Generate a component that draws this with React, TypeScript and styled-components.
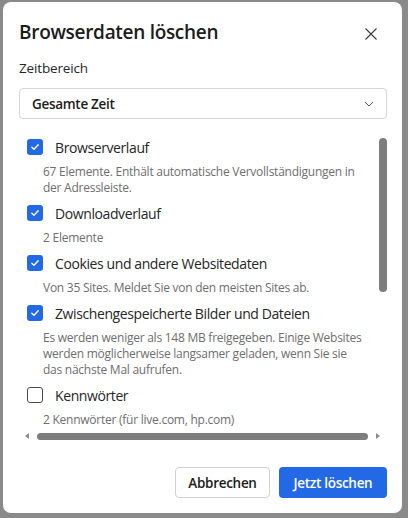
import styled, { createGlobalStyle } from "styled-components";

const blue = "#2369e6";
const font = '"Open Sans", "Noto Sans", "Liberation Sans", sans-serif';

const GlobalStyle = createGlobalStyle`
  html, body {
    margin: 0;
    background: #8a8a8a;
    font-family: ${font};
  }
`;

const Backdrop = styled.div({
  padding: "2px 6px 5px 3px",
  height: "511px",
});

const Dialog = styled.div({
  boxSizing: "border-box",
  height: "511px",
  background: "#fff",
  borderRadius: "8px",
  padding: "16px 15px 15px 16px",
  display: "flex",
  flexDirection: "column",
});

const Header = styled.div({
  display: "flex",
  alignItems: "center",
  justifyContent: "space-between",
  height: "28px",
});

const Title = styled.h1({
  margin: 0,
  fontSize: "19px",
  fontWeight: 600,
  letterSpacing: "-0.3px",
  color: "#1b1b1b",
  lineHeight: "28px",
});

const Close = styled.button({
  width: "24px",
  height: "24px",
  marginRight: "4px",
  marginTop: "4px",
  padding: 0,
  border: "none",
  background: "none",
  display: "flex",
  alignItems: "center",
  justifyContent: "center",
});

const Label = styled.div({
  marginTop: "12px",
  fontSize: "13.5px",
  letterSpacing: "-0.15px",
  lineHeight: "20px",
  color: "#262626",
});

const Select = styled.div({
  boxSizing: "border-box",
  marginTop: "10px",
  height: "31px",
  border: "1px solid #d6d6d6",
  borderRadius: "4px",
  padding: "0 12px 0 12px",
  display: "flex",
  alignItems: "center",
  justifyContent: "space-between",
  fontSize: "13.5px",
  letterSpacing: "-0.3px",
  fontWeight: 600,
  color: "#1b1b1b",
});

const ScrollArea = styled.div({
  marginTop: "9px",
  marginRight: "-2px",
  height: "314px",
  display: "grid",
  gridTemplateColumns: "1fr 12px",
  gridTemplateRows: "1fr 12px",
});

const Viewport = styled.div({
  overflow: "hidden",
  padding: "3px 0 0 8px",
});

const VBar = styled.div({
  paddingTop: "10px",
  paddingLeft: "2px",
});

const VThumb = styled.div({
  width: "8px",
  height: "154px",
  borderRadius: "4px",
  background: "#7d7d7d",
});

const HBar = styled.div({
  gridColumn: "1 / -1",
  display: "flex",
  alignItems: "center",
  gap: "8px",
  padding: "0 9px 0 6px",
});

const HThumb = styled.div({
  flex: 1,
  height: "7px",
  borderRadius: "4px",
  background: "#7d7d7d",
});

const Arrow = styled.div<{ $dir: "left" | "right" }>((p) => ({
  width: 0,
  height: 0,
  borderTop: "3.5px solid transparent",
  borderBottom: "3.5px solid transparent",
  [p.$dir === "left" ? "borderRight" : "borderLeft"]: "4px solid #8c8c8c",
}));

const Item = styled.div({
  marginBottom: "1px",
});

const CheckRow = styled.div({
  height: "32px",
  display: "flex",
  alignItems: "center",
  gap: "12px",
  fontSize: "14px",
  letterSpacing: "-0.4px",
  color: "#262626",
});

const Box = styled.span<{ $on: boolean }>((p) => ({
  boxSizing: "border-box",
  width: "16px",
  height: "16px",
  borderRadius: "3px",
  background: p.$on ? blue : "#fff",
  border: p.$on ? "none" : "1.5px solid #4a4a4a",
  display: "flex",
  alignItems: "center",
  justifyContent: "center",
  flexShrink: 0,
}));

const Desc = styled.div({
  marginTop: "1px",
  marginLeft: "16px",
  fontSize: "12px",
  letterSpacing: "-0.25px",
  lineHeight: "16px",
  color: "#6e6e6e",
  whiteSpace: "nowrap",
});

const Footer = styled.div({
  marginTop: "auto",
  display: "flex",
  justifyContent: "flex-end",
  gap: "9px",
});

const Button = styled.button<{ $primary?: boolean }>((p) => ({
  boxSizing: "border-box",
  height: "31px",
  width: p.$primary ? "108px" : "95px",
  padding: 0,
  borderRadius: "4px",
  fontFamily: font,
  fontSize: "13.5px",
  letterSpacing: "-0.3px",
  fontWeight: 600,
  border: p.$primary ? "none" : "1px solid #d1d1d1",
  background: p.$primary ? blue : "#fff",
  color: p.$primary ? "#fff" : "#1b1b1b",
}));

const items = [
  {
    on: true,
    label: "Browserverlauf",
    desc: ["67 Elemente. Enthält automatische Vervollständigungen in", "der Adressleiste."],
  },
  { on: true, label: "Downloadverlauf", desc: ["2 Elemente"] },
  {
    on: true,
    label: "Cookies und andere Websitedaten",
    desc: ["Von 35 Sites. Meldet Sie von den meisten Sites ab."],
  },
  {
    on: true,
    label: "Zwischengespeicherte Bilder und Dateien",
    desc: [
      "Es werden weniger als 148 MB freigegeben. Einige Websites",
      "werden möglicherweise langsamer geladen, wenn Sie sie",
      "das nächste Mal aufrufen.",
    ],
  },
  { on: false, label: "Kennwörter", desc: ["2 Kennwörter (für live.com, hp.com)"] },
];

const Check = () => (
  <svg width="10" height="10" viewBox="0 0 10 10">
    <path d="M1.8 5.2 L4 7.3 L8.2 2.8" fill="none" stroke="#fff" strokeWidth="1.4" strokeLinecap="round" strokeLinejoin="round" />
  </svg>
);

const App = () => (
  <>
    <GlobalStyle />
    <Backdrop>
      <Dialog>
        <Header>
          <Title>Browserdaten löschen</Title>
          <Close aria-label="Schließen">
            <svg width="12" height="12" viewBox="0 0 12 12">
              <path d="M0.5 0.5 L11.5 11.5 M11.5 0.5 L0.5 11.5" stroke="#3a3a3a" strokeWidth="1.1" />
            </svg>
          </Close>
        </Header>
        <Label>Zeitbereich</Label>
        <Select>
          Gesamte Zeit
          <svg width="10" height="6" viewBox="0 0 10 6">
            <path d="M1 1 L5 5 L9 1" fill="none" stroke="#555" strokeWidth="1" />
          </svg>
        </Select>
        <ScrollArea>
          <Viewport>
            {items.map((it) => (
              <Item key={it.label}>
                <CheckRow>
                  <Box $on={it.on}>{it.on && <Check />}</Box>
                  {it.label}
                </CheckRow>
                <Desc>
                  {it.desc.map((line) => (
                    <div key={line}>{line}</div>
                  ))}
                </Desc>
              </Item>
            ))}
          </Viewport>
          <VBar>
            <VThumb />
          </VBar>
          <HBar>
            <Arrow $dir="left" />
            <HThumb />
            <Arrow $dir="right" />
          </HBar>
        </ScrollArea>
        <Footer>
          <Button>Abbrechen</Button>
          <Button $primary>Jetzt löschen</Button>
        </Footer>
      </Dialog>
    </Backdrop>
  </>
);

export default App;
